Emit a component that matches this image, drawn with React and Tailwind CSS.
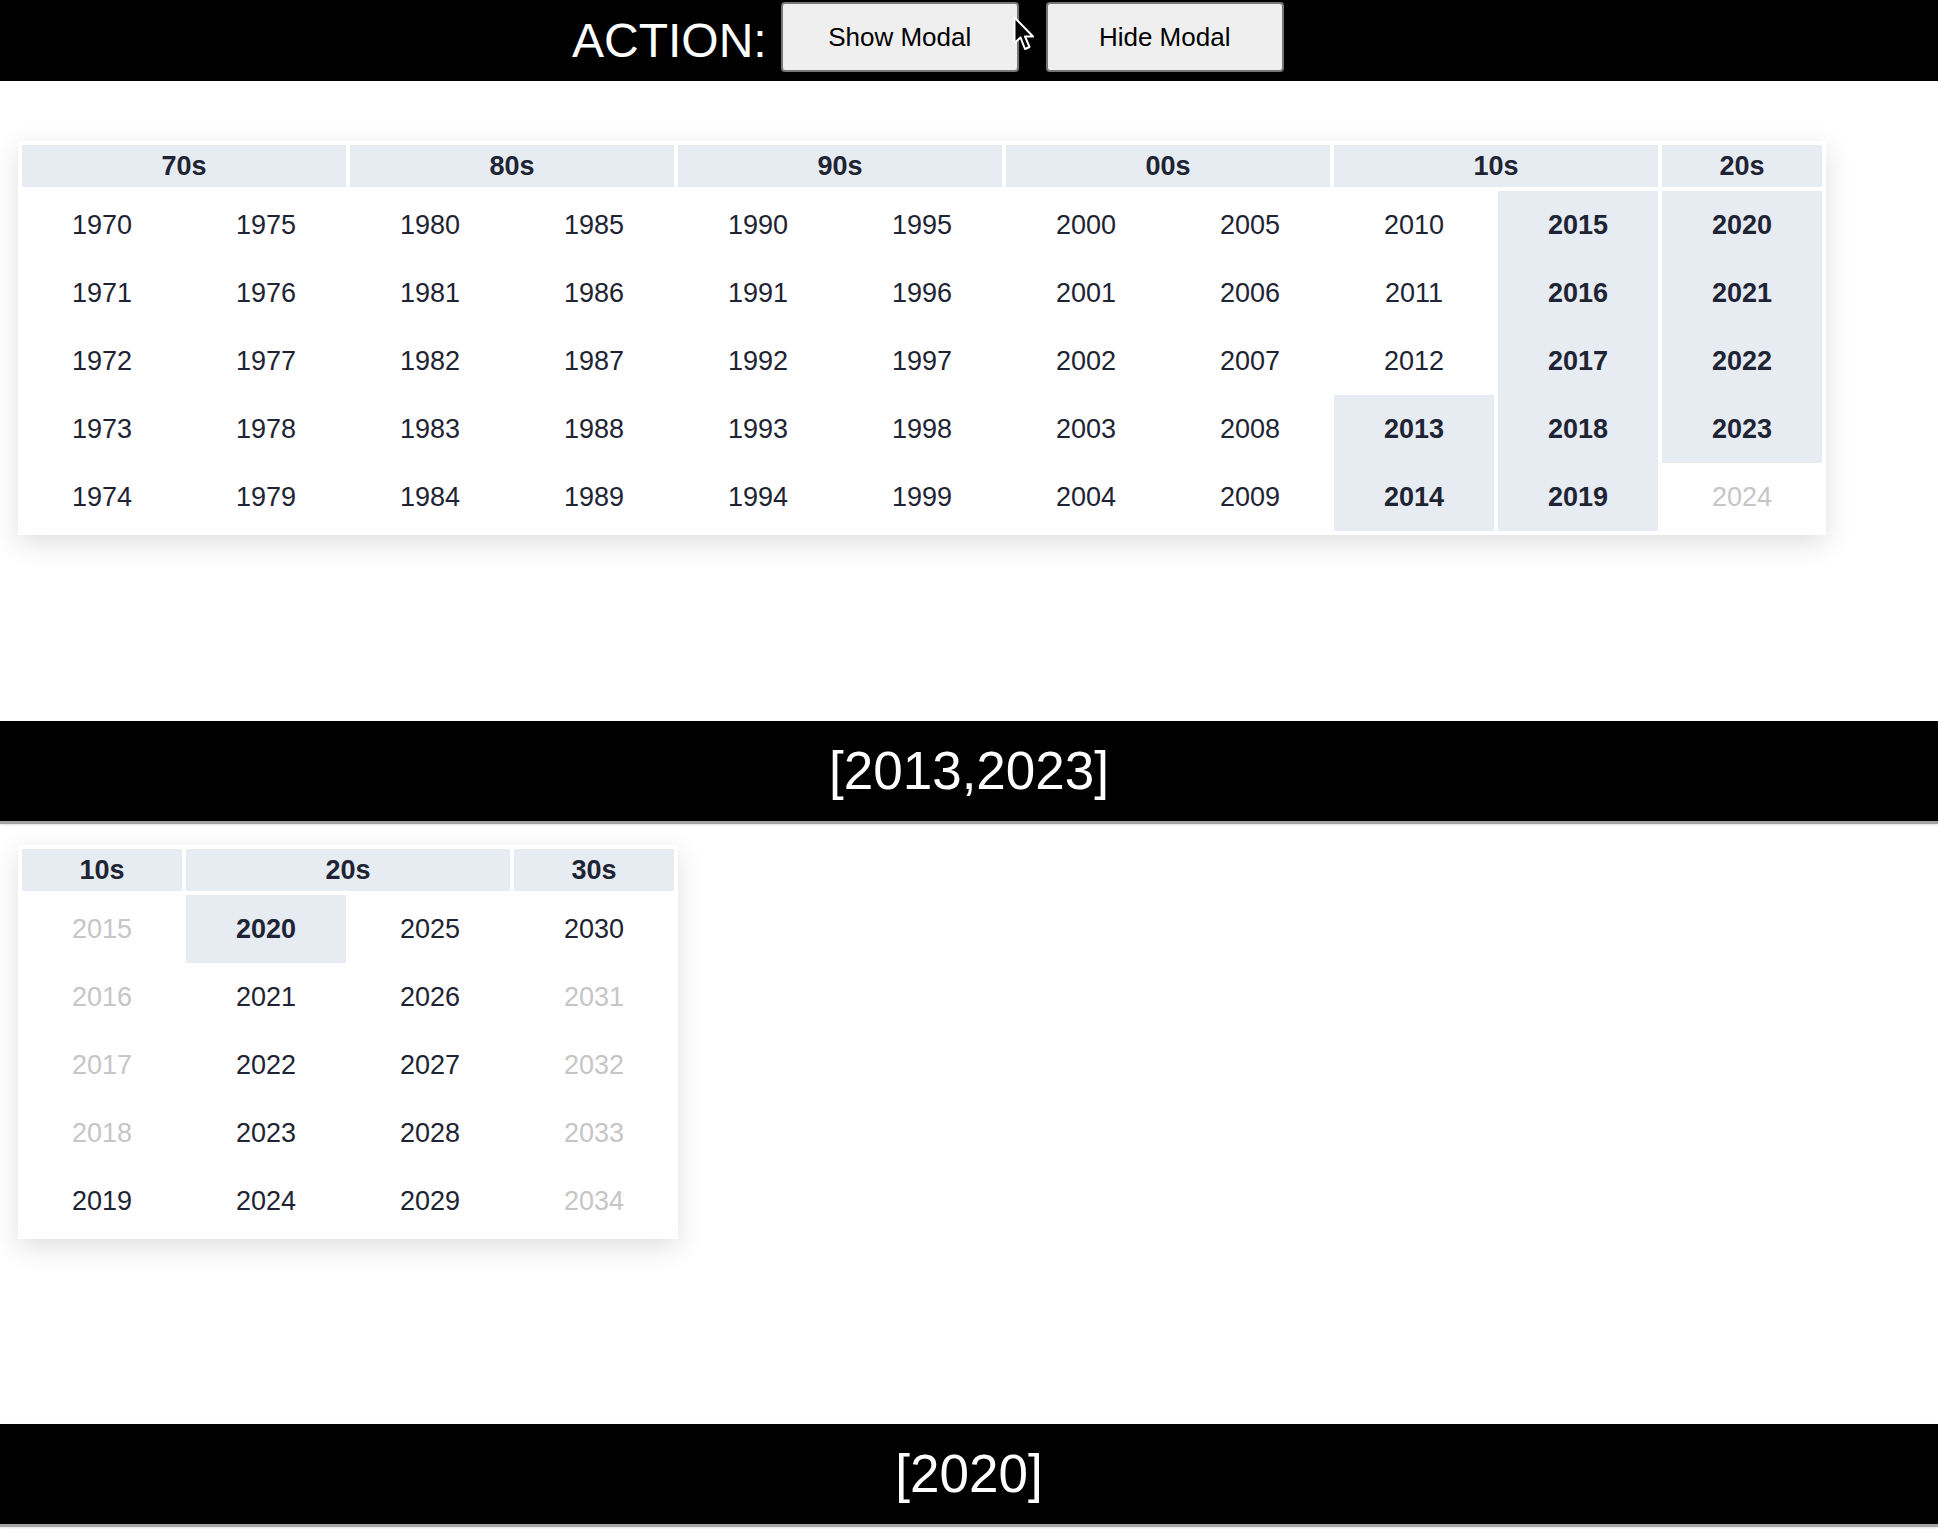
import React from 'react';

const RANGE = [2013, 2023];

// decades for the top picker: each decade gets two columns of five years
const TOP_DECADES = [
  { label: '70s', cols: [1970, 1975] },
  { label: '80s', cols: [1980, 1985] },
  { label: '90s', cols: [1990, 1995] },
  { label: '00s', cols: [2000, 2005] },
  { label: '10s', cols: [2010, 2015] },
  { label: '20s', cols: [2020] },
];

const BOTTOM_DECADES = [
  { label: '10s', cols: [2015] },
  { label: '20s', cols: [2020, 2025] },
  { label: '30s', cols: [2030] },
];

function YearCell({ year, state }) {
  let cls = 'text-[#1e2433]';
  if (state === 'active') cls = 'bg-[#e7ecf2] font-bold text-[#1e2433]';
  if (state === 'muted') cls = 'text-[#c6c6c6]';
  return (
    <div className={`flex h-[68px] w-[160px] items-center justify-center text-[27px] ${cls}`}>
      {year}
    </div>
  );
}

function Picker({ decades, getState }) {
  return (
    <div className="flex gap-[4px] bg-white p-[4px] shadow-[0_8px_26px_rgba(0,0,0,0.13)]">
      {decades.map((d) => (
        <div key={d.label} className="flex flex-col">
          <div className="flex h-[42px] items-center justify-center bg-[#e7ecf2] text-[27px] font-bold text-[#1e2433]">
            {d.label}
          </div>
          <div className="mt-[4px] flex gap-[4px]">
            {d.cols.map((start) => (
              <div key={start} className="flex flex-col">
                {[0, 1, 2, 3, 4].map((i) => (
                  <YearCell key={i} year={start + i} state={getState(start + i)} />
                ))}
              </div>
            ))}
          </div>
        </div>
      ))}
    </div>
  );
}

function Band({ children }) {
  return (
    <div className="flex h-[103px] items-center justify-center border-b-[3px] border-[#a3a3a3] bg-black text-[53px] text-white shadow-[0_1px_2px_rgba(0,0,0,0.12)]">
      {children}
    </div>
  );
}

export default function App() {
  const topState = (y) => {
    if (y > 2023) return 'muted';
    if (y >= RANGE[0] && y <= RANGE[1]) return 'active';
    return 'normal';
  };
  const bottomState = (y) => {
    if (y === 2020) return 'active';
    if (y < 2019 || y > 2030) return 'muted';
    return 'normal';
  };

  return (
    <div className="h-[1534px] w-[1938px] overflow-hidden bg-white font-['Liberation_Sans',Arial,sans-serif]">
      {/* action bar */}
      <div className="relative flex h-[81px] items-start bg-black pl-[572px]">
        <span className="self-center text-[48px] leading-none text-white">ACTION:</span>
        <button className="ml-[14px] mt-[2px] h-[70px] w-[238px] rounded-[4px] border-2 border-[#767676] bg-[#efefef] text-[26px] text-black">
          Show Modal
        </button>
        <button className="ml-[27px] mt-[2px] h-[70px] w-[238px] rounded-[4px] border-2 border-[#767676] bg-[#efefef] text-[26px] text-black">
          Hide Modal
        </button>
        {/* mouse pointer from the capture */}
        <svg className="absolute left-[1013px] top-[16px]" width="24" height="37" viewBox="0 0 24 37">
          <path d="M1.5 1.5 L1.5 27 L7.5 21.5 L12 33 L16.5 31 L12 20.5 L20 20.5 Z" fill="#000" stroke="#fff" strokeWidth="2" strokeLinejoin="round" />
        </svg>
      </div>

      <div className="ml-[18px] mt-[60px] inline-flex">
        <Picker decades={TOP_DECADES} getState={topState} />
      </div>

      <div className="mt-[186px]">
        <Band>[2013,2023]</Band>
      </div>

      <div className="ml-[18px] mt-[21px] inline-flex">
        <Picker decades={BOTTOM_DECADES} getState={bottomState} />
      </div>

      <div className="mt-[185px]">
        <Band>[2020]</Band>
      </div>
    </div>
  );
}
